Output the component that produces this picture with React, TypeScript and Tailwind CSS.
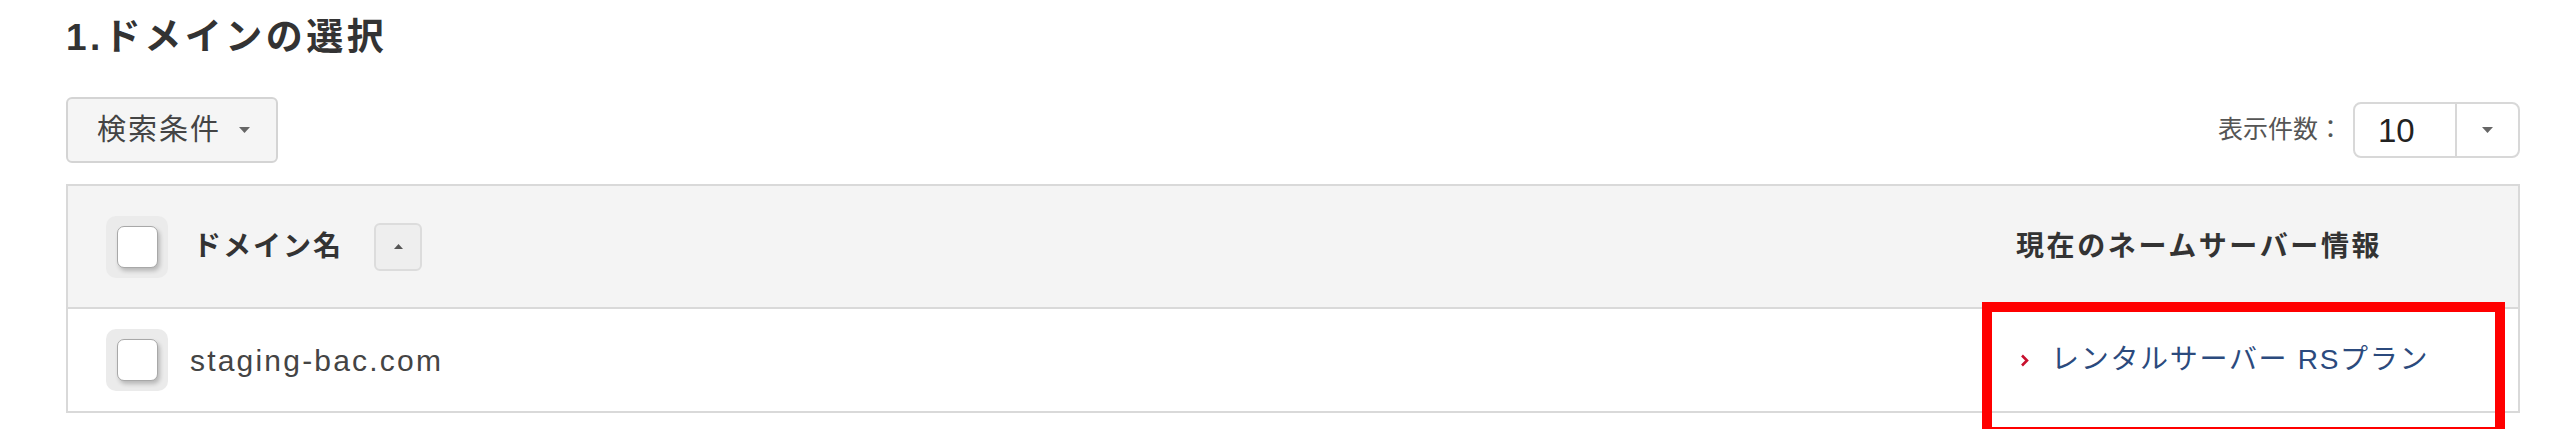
import React from "react";

const font = "font-['Liberation_Sans','Noto_Sans_CJK_JP',sans-serif]";

function Checkbox() {
  return (
    <div className="flex h-[62px] w-[62px] shrink-0 items-center justify-center rounded-[10px] bg-[#ebebeb]">
      <div className="h-[42px] w-[41px] rounded-[7px] border border-[#a8a8a8] bg-white shadow-[2px_3px_4px_rgba(0,0,0,0.22)]" />
    </div>
  );
}

function Caret({ className = "" }: { className?: string }) {
  return (
    <svg width="11" height="6" viewBox="0 0 11 6" className={className}>
      <path d="M0 0 L11 0 L5.5 6 Z" fill="#666" />
    </svg>
  );
}

export default function App() {
  return (
    <div className={`min-h-[429px] bg-white pl-[66px] pr-[40px] pt-[10px] ${font}`}>
      <h2 className="text-[37px] font-bold leading-[56px] tracking-[3.5px] text-[#333]">1.ドメインの選択</h2>

      {/* toolbar */}
      <div className="mt-[31px] flex h-[66px] items-center justify-between">
        <button className="flex h-[66px] w-[212px] items-center rounded-[6px] border-2 border-[#d4d4d4] bg-[#f5f5f5] pl-[29px]">
          <span className="text-[29px] leading-none tracking-[2px] text-[#444]">検索条件</span>
          <Caret className="ml-[18px]" />
        </button>

        <div className="flex items-center">
          <span className="text-[25px] text-[#555]">表示件数：</span>
          <div className="ml-[10px] flex h-[56px] w-[167px] rounded-[8px] border-2 border-[#d8d8d8] bg-white">
            <div className="flex w-[100px] items-center pl-[23px] text-[33px] leading-none text-[#222]">10</div>
            <div className="flex flex-1 items-center justify-center border-l-2 border-[#d8d8d8]">
              <Caret />
            </div>
          </div>
        </div>
      </div>

      {/* table */}
      <div className="mt-[21px] border-2 border-[#d9d9d9]">
        <div className="flex h-[123px] items-center border-b-2 border-[#d9d9d9] bg-[#f4f4f4]">
          <div className="flex flex-1 items-center pl-[38px]">
            <Checkbox />
            <span className="ml-[25px] text-[28px] font-bold tracking-[2px] text-[#333]">ドメイン名</span>
            <div className="ml-[31px] flex h-[48px] w-[48px] items-center justify-center rounded-[6px] border-2 border-[#dcdcdc] bg-[#eeeeee]">
              <svg width="9" height="5" viewBox="0 0 9 5">
                <path d="M0 5 L4.5 0 L9 5 Z" fill="#555" />
              </svg>
            </div>
          </div>
          <div className="w-[533px] pl-[31px] text-[28px] font-bold tracking-[2.6px] text-[#333]">
            現在のネームサーバー情報
          </div>
        </div>

        <div className="flex h-[102px] items-center">
          <div className="flex flex-1 items-center pl-[38px]">
            <Checkbox />
            <span className="ml-[22px] text-[30px] tracking-[2.2px] text-[#444]">staging-bac.com</span>
          </div>
          <div className="relative flex h-full w-[533px] items-center pl-[35px]">
            <svg width="9" height="13" viewBox="0 0 9 13" className="mr-[22px]">
              <path d="M2 1.5 L7 6.5 L2 11.5" fill="none" stroke="#c8102e" strokeWidth="2.6" />
            </svg>
            <span className="text-[28px] tracking-[1.7px] text-[#2b4a7d]">レンタルサーバー RSプラン</span>
            <div className="absolute left-[-3px] top-[-7px] h-[135px] w-[523px] border-[10px] border-[#ff0000]" />
          </div>
        </div>
      </div>
    </div>
  );
}
